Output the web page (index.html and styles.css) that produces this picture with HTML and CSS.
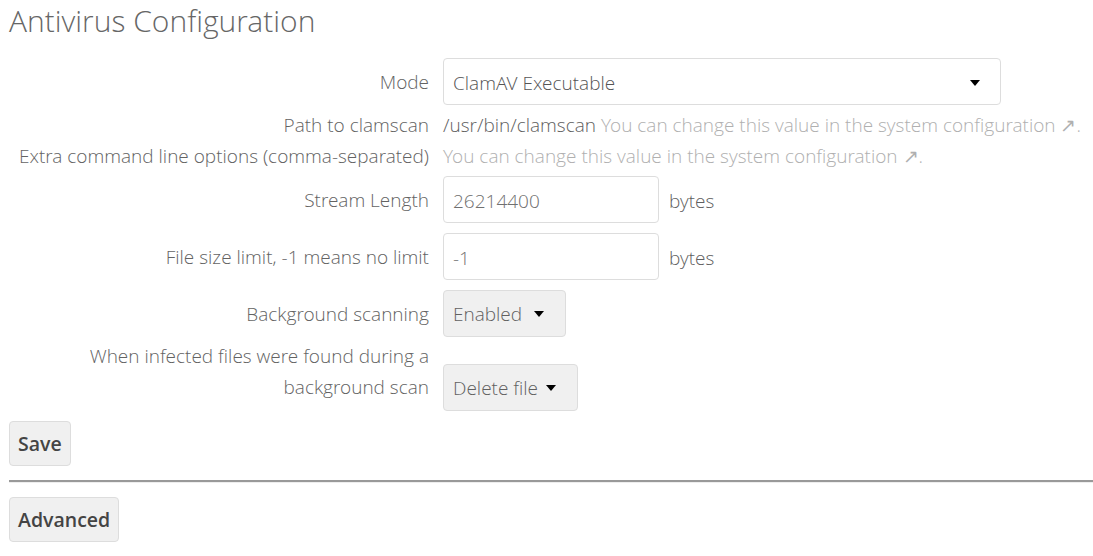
FILE: index.html
```html
<!DOCTYPE html>
<html>
<head>
<meta charset="utf-8">
<link rel="stylesheet" href="styles.css">
</head>
<body>
<div class="page">
  <h1 class="title">Antivirus Configuration</h1>
  <form class="form">
    <div class="row row-field">
      <label class="label">Mode</label>
      <div class="control">
        <div class="select select-wide"><span>ClamAV Executable</span><i class="caret"></i></div>
      </div>
    </div>
    <div class="row row-text first-text">
      <label class="label">Path to clamscan</label>
      <div class="text-value">/usr/bin/clamscan <span class="hint">You can change this value in the system configuration ↗.</span></div>
    </div>
    <div class="row row-text">
      <label class="label">Extra command line options (comma-separated)</label>
      <div class="text-value"><span class="hint">You can change this value in the system configuration ↗.</span></div>
    </div>
    <div class="row row-field gap-s">
      <label class="label">Stream Length</label>
      <div class="control"><div class="input">26214400</div><span class="unit">bytes</span></div>
    </div>
    <div class="row row-field gap-m">
      <label class="label">File size limit, -1 means no limit</label>
      <div class="control"><div class="input">-1</div><span class="unit">bytes</span></div>
    </div>
    <div class="row row-field gap-m">
      <label class="label">Background scanning</label>
      <div class="control"><div class="btn-select wide-gap"><span>Enabled</span><i class="caret"></i></div></div>
    </div>
    <div class="row row-multi gap-s">
      <label class="label">When infected files were found during a background scan</label>
      <div class="control"><div class="btn-select"><span>Delete file</span><i class="caret"></i></div></div>
    </div>
  </form>
  <div class="actions first-actions"><button class="btn" type="button">Save</button></div>
  <hr class="sep">
  <div class="actions"><button class="btn" type="button">Advanced</button></div>
</div>
</body>
</html>
```

FILE: styles.css
```css
html, body {
  margin: 0;
  padding: 0;
  background: #fff;
}
body {
  font-family: "Open Sans Light", "Open Sans", "Liberation Sans", sans-serif;
  font-weight: 300;
  color: #606060;
}
.page {
  padding: 0 0 0 9px;
}
.title {
  margin: 0;
  padding-top: 1px;
  font-size: 30px;
  font-weight: 300;
  line-height: 40px;
  color: #666;
  height: 58px;
  box-sizing: border-box;
}
.form {
  display: flex;
  flex-direction: column;
}
.row {
  display: flex;
  align-items: center;
}
.label {
  width: 420px;
  flex: none;
  text-align: right;
  font-size: 19px;
  line-height: 31px;
  color: #636363;
  margin-right: 14px;
}
.row-field .label {
  padding-top: 2px;
}
.control {
  display: flex;
  align-items: center;
  font-size: 19px;
}
.row-text {
  height: 31px;
}
.first-text {
  margin-top: 5px;
}
.text-value {
  font-size: 19px;
  color: #606060;
  line-height: 31px;
  white-space: nowrap;
}
.hint {
  color: #b0b0b0;
}
.gap-s { margin-top: 4px; }
.gap-m { margin-top: 10px; }
.select {
  box-sizing: border-box;
  height: 47px;
  border: 1px solid #ddd;
  border-radius: 4px;
  background: #fff;
  display: flex;
  align-items: center;
  justify-content: space-between;
  padding: 2px 20px 0 9px;
  color: #555;
  font-size: 19px;
}
.select-wide {
  width: 558px;
}
.caret {
  display: inline-block;
  width: 0;
  height: 0;
  border-left: 5px solid transparent;
  border-right: 5px solid transparent;
  border-top: 6px solid #000;
}
.input {
  box-sizing: border-box;
  width: 216px;
  height: 47px;
  border: 1px solid #ddd;
  border-radius: 4px;
  padding: 2px 9px 0;
  display: flex;
  align-items: center;
  color: #707070;
}
.unit {
  margin-left: 10px;
  padding-top: 2px;
  color: #606060;
}
.btn-select {
  box-sizing: border-box;
  height: 47px;
  border: 1px solid #ddd;
  border-radius: 4px;
  background: #f0f0f0;
  display: flex;
  align-items: center;
  gap: 8px;
  padding: 1px 21px 0 9px;
  color: #606060;
  font-size: 19px;
}
.btn-select.wide-gap {
  gap: 12px;
}
.row-multi {
  align-items: flex-start;
}
.row-multi .control {
  margin-top: 23px;
}
.actions {
  display: flex;
}
.first-actions {
  margin-top: 10px;
}
.btn {
  box-sizing: border-box;
  height: 45px;
  padding: 0 8px;
  border: 1px solid #ddd;
  border-radius: 4px;
  background: #f0f0f0;
  font-family: "Open Sans", "Liberation Sans", sans-serif;
  font-size: 19.5px;
  font-weight: 600;
  color: #444;
}
.sep {
  margin: 14px 0 14px 0;
  border: 0;
  border-top: 2px solid #999;
  border-bottom: 1px solid #eee;
  height: 0;
}
```
